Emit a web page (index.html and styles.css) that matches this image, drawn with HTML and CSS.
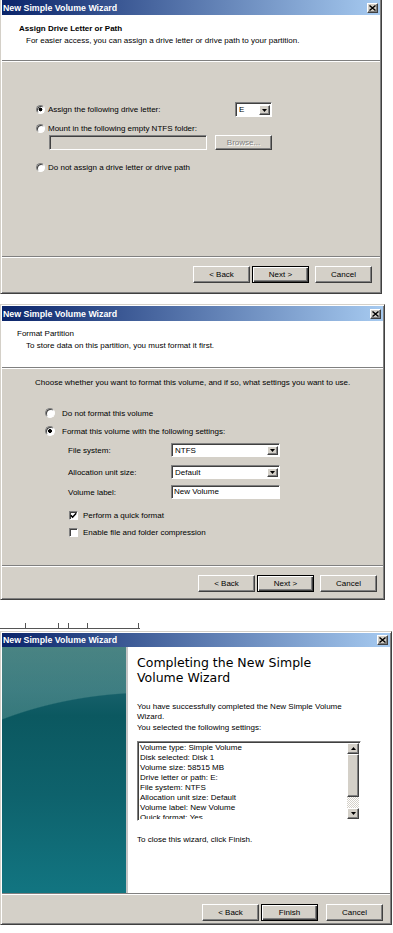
FILE: index.html
```html
<!DOCTYPE html>
<html>
  <head>
    <meta charset="utf-8">
    <title>New Simple Volume Wizard</title>
    <link rel="stylesheet" href="styles.css">
  </head>
  <body>
    <!-- step 1: drive letter -->
    <div class="window win-letter">
      <div class="titlebar">
        <span class="caption">New Simple Volume Wizard</span>
        <span class="close"><svg width="7" height="6" viewBox="0 0 7 6"><path d="M0.5 0.5L6.5 5.5M6.5 0.5L0.5 5.5" stroke="#000" stroke-width="1.4"/></svg></span>
      </div>
      <div class="header">
        <div class="header-title bold">Assign Drive Letter or Path</div>
        <div class="header-sub">For easier access, you can assign a drive letter or drive path to your partition.</div>
      </div>
      <div class="page letter-page">
        <div class="row row-assign">
          <span class="option"><span class="radio on"></span>Assign the following drive letter:</span>
          <span class="combo combo-letter">
            <span class="combo-text">E</span>
            <span class="combo-btn"><svg width="5" height="3" viewBox="0 0 5 3"><path d="M0 0h5l-2.5 3z" fill="#000"/></svg></span>
          </span>
        </div>
        <div class="row row-mount"><span class="radio"></span>Mount in the following empty NTFS folder:</div>
        <div class="row row-path">
          <span class="textbox disabled"></span>
          <button class="btn browse">Browse...</button>
        </div>
        <div class="row row-none"><span class="radio"></span>Do not assign a drive letter or drive path</div>
      </div>
      <div class="footer">
        <button class="btn">&lt; Back</button>
        <button class="btn default">Next &gt;</button>
        <button class="btn cancel">Cancel</button>
      </div>
    </div>

    <!-- step 2: format -->
    <div class="window win-format">
      <div class="titlebar">
        <span class="caption">New Simple Volume Wizard</span>
        <span class="close"><svg width="7" height="6" viewBox="0 0 7 6"><path d="M0.5 0.5L6.5 5.5M6.5 0.5L0.5 5.5" stroke="#000" stroke-width="1.4"/></svg></span>
      </div>
      <div class="header">
        <div class="header-title">Format Partition</div>
        <div class="header-sub">To store data on this partition, you must format it first.</div>
      </div>
      <div class="page format-page">
        <div class="intro">Choose whether you want to format this volume, and if so, what settings you want to use.</div>
        <div class="row fmt-radio first"><span class="radio"></span>Do not format this volume</div>
        <div class="row fmt-radio"><span class="radio on"></span>Format this volume with the following settings:</div>
        <div class="settings">
          <div class="setting">
            <span class="setting-label">File system:</span>
            <span class="combo combo-wide">
              <span class="combo-text">NTFS</span>
              <span class="combo-btn"><svg width="5" height="3" viewBox="0 0 5 3"><path d="M0 0h5l-2.5 3z" fill="#000"/></svg></span>
            </span>
          </div>
          <div class="setting">
            <span class="setting-label">Allocation unit size:</span>
            <span class="combo combo-wide">
              <span class="combo-text">Default</span>
              <span class="combo-btn"><svg width="5" height="3" viewBox="0 0 5 3"><path d="M0 0h5l-2.5 3z" fill="#000"/></svg></span>
            </span>
          </div>
          <div class="setting">
            <span class="setting-label">Volume label:</span>
            <span class="textbox label-box">New Volume</span>
          </div>
        </div>
        <div class="row check-row first">
          <span class="checkbox"><svg width="7" height="7" viewBox="0 0 7 7"><path d="M0.8 3.2L2.6 5.2L6.2 1.2" fill="none" stroke="#000" stroke-width="1.5"/></svg></span>Perform a quick format
        </div>
        <div class="row check-row"><span class="checkbox"></span>Enable file and folder compression</div>
      </div>
      <div class="footer">
        <button class="btn">&lt; Back</button>
        <button class="btn default">Next &gt;</button>
        <button class="btn cancel">Cancel</button>
      </div>
    </div>

    <div class="ruler"><span></span><span></span><span></span><span></span><span></span></div>

    <!-- step 3: finish -->
    <div class="window win-finish">
      <div class="titlebar">
        <span class="caption">New Simple Volume Wizard</span>
        <span class="close"><svg width="7" height="6" viewBox="0 0 7 6"><path d="M0.5 0.5L6.5 5.5M6.5 0.5L0.5 5.5" stroke="#000" stroke-width="1.4"/></svg></span>
      </div>
      <div class="finish-body">
        <div class="banner"></div>
        <div class="finish-content">
          <h1 class="finish-title">Completing the New Simple Volume Wizard</h1>
          <p class="done">You have successfully completed the New Simple Volume Wizard.</p>
          <p class="selected">You selected the following settings:</p>
          <div class="listbox">
            <div class="list-lines">
              <div>Volume type: Simple Volume</div>
              <div>Disk selected: Disk 1</div>
              <div>Volume size: 58515 MB</div>
              <div>Drive letter or path: E:</div>
              <div>File system: NTFS</div>
              <div>Allocation unit size: Default</div>
              <div>Volume label: New Volume</div>
              <div>Quick format: Yes</div>
            </div>
            <div class="scrollbar">
              <span class="sb-btn"><svg width="5" height="3" viewBox="0 0 5 3"><path d="M0 3h5l-2.5-3z" fill="#000"/></svg></span>
              <span class="sb-thumb"></span>
              <span class="sb-track"></span>
              <span class="sb-btn"><svg width="5" height="3" viewBox="0 0 5 3"><path d="M0 0h5l-2.5 3z" fill="#000"/></svg></span>
            </div>
          </div>
          <p class="close-hint">To close this wizard, click Finish.</p>
        </div>
      </div>
      <div class="footer">
        <button class="btn">&lt; Back</button>
        <button class="btn default">Finish</button>
        <button class="btn cancel">Cancel</button>
      </div>
    </div>
  </body>
</html>
```

FILE: styles.css
```css
* {
  box-sizing: border-box;
}
body {
  margin: 0;
  background-color: #fff;
  font-family: "Liberation Sans", Arial, sans-serif;
  font-size: 8px;
  color: #000;
}

/* window frame */
.window {
  display: flex;
  flex-direction: column;
  background-color: #d4d0c8;
  border: 1px solid;
  border-color: #d4d0c8 #404040 #404040 #d4d0c8;
  padding: 1px;
  box-shadow: inset 1px 1px #fff, inset -1px -1px #808080;
}
.win-letter {
  width: 382px;
  height: 296px;
  margin-top: -2px;
}
.win-format {
  width: 385px;
  height: 296px;
  margin-top: 10px;
}
.win-finish {
  width: 392px;
  height: 294px;
  margin-top: 2px;
}

.titlebar {
  flex: none;
  display: flex;
  align-items: center;
  justify-content: space-between;
  height: 15px;
  padding: 0 2px 0 1px;
  background: linear-gradient(to right, #0a246a, #a6caf0);
  color: #fff;
  font-weight: bold;
  font-size: 8.8px;
}
.win-finish .titlebar {
  height: 14px;
}
.close {
  display: flex;
  align-items: center;
  justify-content: center;
  width: 11px;
  height: 10px;
  background-color: #d4d0c8;
  border: 1px solid;
  border-color: #fff #404040 #404040 #fff;
  box-shadow: inset -1px -1px #808080;
}

/* white page header */
.header {
  flex: none;
  background-color: #fff;
  border-bottom: 1px solid #808080;
  line-height: 12px;
}
.win-letter .header {
  height: 46px;
  padding: 8px 0 0 17px;
}
.win-format .header {
  height: 47px;
  padding: 7px 0 0 15px;
}
.bold {
  font-weight: bold;
}
.win-letter .header-sub {
  padding-left: 7px;
}
.win-format .header-sub {
  padding-left: 9px;
}

.page {
  flex: 1;
  border-top: 1px solid #fff;
}
.row {
  display: flex;
  align-items: center;
  height: 12px;
}

/* controls */
.radio {
  flex: none;
  width: 9px;
  height: 9px;
  margin-right: 3px;
  border-radius: 50%;
  background-color: #fff;
  border: 1px solid;
  border-color: #808080 #fff #fff #808080;
  box-shadow: inset 1px 1px #404040;
}
.radio.on {
  background: radial-gradient(circle, #000 0 1.6px, #fff 2.2px);
}
.checkbox {
  flex: none;
  display: flex;
  align-items: center;
  justify-content: center;
  width: 9px;
  height: 9px;
  margin-right: 5px;
  background-color: #fff;
  border: 1px solid;
  border-color: #808080 #fff #fff #808080;
  box-shadow: inset 1px 1px #404040;
}
.textbox {
  display: block;
  height: 15px;
  padding: 2px 0 0 2px;
  background-color: #fff;
  border: 1px solid;
  border-color: #808080 #fff #fff #808080;
  box-shadow: inset 1px 1px #404040;
}
.textbox.disabled {
  background-color: #d4d0c8;
}
.combo {
  display: flex;
  height: 15px;
  padding: 2px 1px 1px 2px;
  background-color: #fff;
  border: 1px solid;
  border-color: #808080 #fff #fff #808080;
  box-shadow: inset 1px 1px #404040;
}
.combo-text {
  flex: 1;
  line-height: 10px;
  padding-left: 1px;
}
.combo-btn {
  display: flex;
  align-items: center;
  justify-content: center;
  width: 11px;
  background-color: #d4d0c8;
  border: 1px solid;
  border-color: #fff #404040 #404040 #fff;
  box-shadow: inset -1px -1px #808080;
}

.btn {
  flex: none;
  width: 57px;
  height: 17px;
  padding: 0;
  font: inherit;
  color: #000;
  background-color: #d4d0c8;
  border: 1px solid;
  border-color: #fff #404040 #404040 #fff;
  box-shadow: inset -1px -1px #808080;
}
.btn.default {
  border-color: #000;
  box-shadow: inset 1px 1px #fff, inset -1px -1px #404040, inset -2px -2px #808080;
}
.btn + .btn {
  margin-left: 2px;
}
.btn.cancel {
  margin-left: 6px;
}
.browse {
  height: 15px;
  margin-left: 8px;
  color: #808080;
  text-shadow: 1px 1px #fff;
}

/* step 1 */
.letter-page {
  padding: 40px 0 0 34px;
}
.row-assign {
  height: 15px;
}
.option {
  display: flex;
  align-items: center;
  width: 199px;
}
.combo-letter {
  width: 37px;
}
.row-mount {
  margin-top: 5px;
}
.row-path {
  height: 15px;
  margin-top: 1px;
  padding-left: 13px;
}
.row-path .textbox {
  width: 158px;
}
.row-none {
  margin-top: 11px;
}

/* step 2 */
.format-page {
  padding: 8px 0 0 33px;
}
.intro {
  line-height: 12px;
}
.fmt-radio {
  margin-top: 6px;
  padding-left: 10px;
}
.fmt-radio.first {
  margin-top: 18px;
}
.fmt-radio .radio {
  width: 10px;
  height: 10px;
  margin-right: 7px;
}
.settings {
  padding-left: 33px;
}
.setting {
  display: flex;
  align-items: center;
  height: 14px;
  margin-top: 6px;
}
.setting + .setting {
  margin-top: 8px;
}
.setting + .setting + .setting {
  margin-top: 6px;
}
.setting-label {
  width: 103px;
}
.combo-wide,
.label-box {
  width: 109px;
  height: 14px;
}
.label-box {
  padding-top: 1px;
}
.check-row {
  margin-top: 5px;
  padding-left: 34px;
}
.check-row.first {
  margin-top: 10px;
}

/* footer */
.footer {
  flex: none;
  display: flex;
  justify-content: flex-end;
  border-top: 1px solid #808080;
  box-shadow: inset 0 1px #fff;
}
.win-letter .footer {
  padding: 9px 8px 9px 0;
}
.win-format .footer {
  padding: 9px 6px 6px 0;
}
.win-finish .footer {
  padding: 10px 7px 2px 0;
}
.win-finish .btn.cancel {
  margin-left: 8px;
}

/* ruler scrap between shots */
.ruler {
  display: flex;
  width: 140px;
  height: 6px;
  margin-top: 23px;
  border-bottom: 1px solid #555;
}
.ruler span {
  border-right: 1px solid #555;
}
.ruler span:nth-child(1) { width: 26px; }
.ruler span:nth-child(2) { width: 33px; }
.ruler span:nth-child(3) { width: 10px; }
.ruler span:nth-child(4) { width: 19px; }
.ruler span:nth-child(5) { width: 51px; }

/* step 3 */
.finish-body {
  flex: 1;
  display: flex;
}
.banner {
  width: 126px;
  border-right: 2px solid #c4c4c4;
  background:
    radial-gradient(300px 200px at 150px 245px, rgba(0, 0, 0, 0) 99.4%, rgba(120, 170, 165, 0.4) 100%),
    linear-gradient(to bottom, #2a6a6c 0, #17606a 18%, #0b5860 28%, #0e626c 60%, #127581 100%);
}
.finish-content {
  flex: 1;
  background-color: #fff;
  padding: 8px 29px 0 9px;
}
.finish-title {
  max-width: 200px;
  margin: 0;
  font-family: "DejaVu Sans", Verdana, sans-serif;
  font-size: 12.5px;
  font-weight: normal;
  line-height: 15px;
}
.finish-content p {
  margin: 0;
  line-height: 10px;
}
.finish-content .done {
  margin-top: 17px;
}
.finish-content .selected {
  margin-top: 1px;
}
.listbox {
  display: flex;
  height: 80px;
  margin-top: 8px;
  padding: 1px;
  background-color: #fff;
  border: 1px solid;
  border-color: #808080 #fff #fff #808080;
  box-shadow: inset 1px 1px #404040;
}
.list-lines {
  flex: 1;
  overflow: hidden;
  padding-left: 1px;
  line-height: 10px;
}
.scrollbar {
  display: flex;
  flex-direction: column;
  width: 12px;
}
.sb-btn,
.sb-thumb {
  display: flex;
  align-items: center;
  justify-content: center;
  height: 11px;
  background-color: #d4d0c8;
  border: 1px solid;
  border-color: #fff #404040 #404040 #fff;
  box-shadow: inset -1px -1px #808080;
}
.sb-thumb {
  height: 43px;
}
.sb-track {
  flex: 1;
  background: repeating-conic-gradient(#fff 0 25%, #d4d0c8 0 50%) 0 0 / 2px 2px;
}
.finish-content .close-hint {
  margin-top: 14px;
}
```
